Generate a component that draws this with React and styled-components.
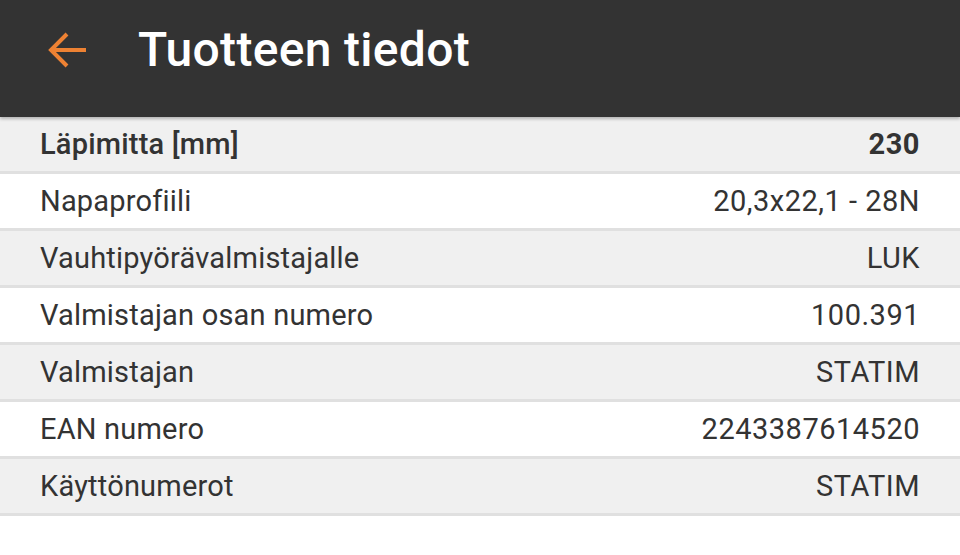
import React from 'react';
import styled, { createGlobalStyle } from 'styled-components';

const GlobalStyle = createGlobalStyle`
  html, body {
    margin: 0;
    padding: 0;
    background: #fff;
    font-family: Roboto, "Liberation Sans", sans-serif;
  }
`;

const Page = styled.div`
  width: 960px;
  height: 555px;
  background: #fff;
  overflow: hidden;
`;

const TopBar = styled.header`
  display: flex;
  align-items: center;
  height: 117px;
  padding: 0 0 0 46px;
  box-sizing: border-box;
  background: #333333;
  box-shadow: 0 2px 3px rgba(0, 0, 0, 0.25);
  position: relative;
  z-index: 1;
`;

const BackButton = styled.button`
  display: flex;
  align-items: center;
  justify-content: center;
  width: 44px;
  height: 44px;
  padding: 0;
  border: none;
  background: none;
  margin-top: -18px;
`;

const Title = styled.h1`
  margin: 0 0 0 48px;
  margin-top: -19px;
  color: #fff;
  font-size: 48px;
  font-weight: 500;
  letter-spacing: 0.3px;
`;

const List = styled.div`
  display: flex;
  flex-direction: column;
`;

const Row = styled.div`
  display: flex;
  justify-content: space-between;
  align-items: center;
  height: 54px;
  padding: 0 40px;
  background: ${p => (p.$striped ? '#f0f0f0' : '#fff')};
  border-bottom: 3px solid #e0e0e0;
  color: #333;
  font-size: 29px;
  letter-spacing: 0.2px;
  font-weight: ${p => (p.$bold ? 700 : 400)};
`;

const Label = styled.span`
  font-weight: ${p => (p.$bold ? 500 : 'inherit')};
`;

const Value = styled.span`
  letter-spacing: 0.5px;
`;

const rows = [
  ['Läpimitta [mm]', '230'],
  ['Napaprofiili', '20,3x22,1 - 28N'],
  ['Vauhtipyörävalmistajalle', 'LUK'],
  ['Valmistajan osan numero', '100.391'],
  ['Valmistajan', 'STATIM'],
  ['EAN numero', '2243387614520'],
  ['Käyttönumerot', 'STATIM'],
];

export default function App() {
  return (
    <Page>
      <GlobalStyle />
      <TopBar>
        <BackButton aria-label="Takaisin">
          <svg width="44" height="44" viewBox="0 0 44 44" fill="none">
            <path d="M40 22H5M21 6L5 22l16 16" stroke="#ee8233" strokeWidth="4" />
          </svg>
        </BackButton>
        <Title>Tuotteen tiedot</Title>
      </TopBar>
      <List>
        {rows.map(([label, value], i) => (
          <Row key={label} $striped={i % 2 === 0} $bold={i === 0}>
            <Label $bold={i === 0}>{label}</Label>
            <Value>{value}</Value>
          </Row>
        ))}
      </List>
    </Page>
  );
}
